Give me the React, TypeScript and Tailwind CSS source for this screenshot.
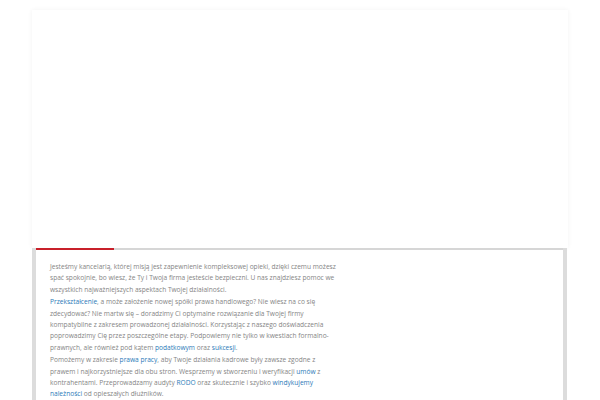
import React from "react";

const A = ({ children }: { children: React.ReactNode }) => (
  <a className="text-[#2b7ab8]">{children}</a>
);

export default function App() {
  return (
    <div className="w-[600px] h-[400px] overflow-hidden bg-white pt-[10px] px-[32px]" style={{ fontFamily: '"Open Sans", "DejaVu Sans", sans-serif' }}>
      <div className="h-[238px] w-[536px] bg-white shadow-[0_0_5px_rgba(0,0,0,0.05)]" />
      <div className="w-[535px] h-[200px] border-x-4 border-[#dcdcdc] bg-white">
        <div className="flex h-[2px]">
          <div className="w-[78px] bg-[#c8202a]" />
          <div className="flex-1 bg-[#d6d6d6]" />
        </div>
        <div className="pl-[14px] pt-[11px] w-[300px] text-[6.6px] leading-[11.3px] text-[#858585]">
          <p className="mb-[1.5px]">
            Jesteśmy kancelarią, której misją jest zapewnienie kompleksowej opieki, dzięki czemu możesz spać spokojnie, bo wiesz, że Ty i Twoja firma jesteście bezpieczni. U nas znajdziesz pomoc we wszystkich najważniejszych aspektach Twojej działalności.
          </p>
          <p className="mb-[1.5px]">
            <A>Przekształcenie</A>, a może założenie nowej spółki prawa handlowego? Nie wiesz na co się zdecydować? Nie martw się – doradzimy Ci optymalne rozwiązanie dla Twojej firmy kompatybilne z zakresem prowadzonej działalności. Korzystając z naszego doświadczenia poprowadzimy Cię przez poszczególne etapy. Podpowiemy nie tylko w kwestiach formalno-prawnych, ale również pod kątem <A>podatkowym</A> oraz <A>sukcesji</A>.
          </p>
          <p>
            Pomożemy w zakresie <A>prawa pracy</A>, aby Twoje działania kadrowe były zawsze zgodne z prawem i najkorzystniejsze dla obu stron. Wesprzemy w stworzeniu i weryfikacji <A>umów</A> z kontrahentami. Przeprowadzamy audyty <A>RODO</A> oraz skutecznie i szybko <A>windykujemy należności</A> od opieszałych dłużników.
          </p>
        </div>
      </div>
    </div>
  );
}
